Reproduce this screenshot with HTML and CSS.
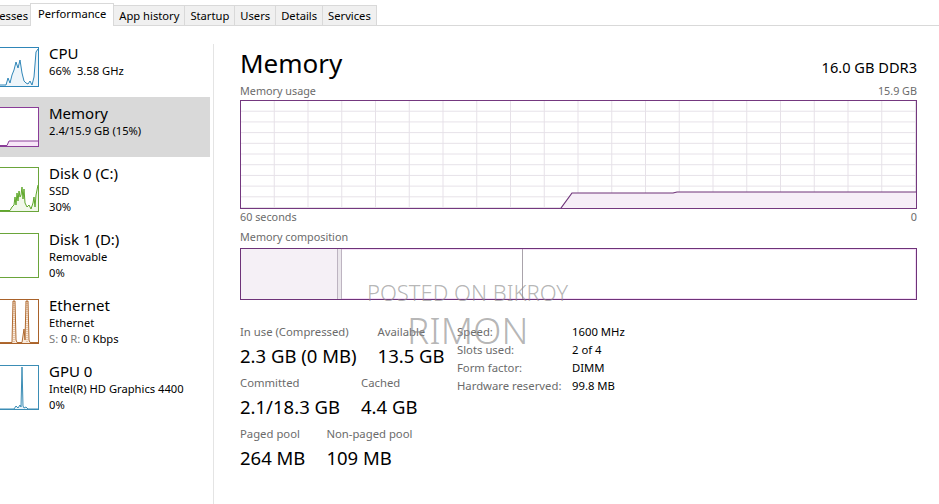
FILE: index.html
```html
<!DOCTYPE html>
<html lang="en">
<head>
<meta charset="utf-8">
<title>Task Manager - Performance</title>
<link rel="stylesheet" href="styles.css">
</head>
<body>
<div class="tabs">
  <div class="tab first">Processes</div>
  <div class="tab active">Performance</div>
  <div class="tab">App history</div>
  <div class="tab">Startup</div>
  <div class="tab">Users</div>
  <div class="tab">Details</div>
  <div class="tab">Services</div>
</div>
<div class="main">
  <nav class="sidebar">
    <div class="item">
      <div class="thumb cpu">
        <svg width="38" height="38" viewBox="0 0 38 38"><polygon class="fill" points="0,38 0,37 6,37 8,30 10,35 12,27 14,22 16,14 18,20 20,12 22,25 24,33 26,35 28,36 30,33 32,37 34,29 36,4 38,1 38,38"/><polyline class="line" points="0,37 6,37 8,30 10,35 12,27 14,22 16,14 18,20 20,12 22,25 24,33 26,35 28,36 30,33 32,37 34,29 36,4 38,1"/></svg>
      </div>
      <div class="info"><div class="name">CPU</div><div class="sub">66%&nbsp; 3.58 GHz</div></div>
    </div>
    <div class="item selected">
      <div class="thumb mem">
        <svg width="38" height="38" viewBox="0 0 38 38"><polygon class="fill" points="0,38 7,38 9,33 38,33 38,38"/><polyline class="line" points="0,37.5 7,37.5 9,33 38,33"/></svg>
      </div>
      <div class="info"><div class="name">Memory</div><div class="sub">2.4/15.9 GB (15%)</div></div>
    </div>
    <div class="item tall">
      <div class="thumb disk">
        <svg width="38" height="43" viewBox="0 0 38 43"><polygon class="fill" points="0,43 10,43 12,39 14,37 15,29 16,37 17,25 18,33 19,23 20,29 21,27 22,19 23,31 24,21 25,35 27,39 29,37 31,41 33,35 34,29 35,39 36,27 38,17 38,43"/><polyline class="line" points="0,42.5 10,42.5 12,39 14,37 15,29 16,37 17,25 18,33 19,23 20,29 21,27 22,19 23,31 24,21 25,35 27,39 29,37 31,41 33,35 34,29 35,39 36,27 38,17"/></svg>
      </div>
      <div class="info"><div class="name">Disk 0 (C:)</div><div class="sub">SSD</div><div class="sub">30%</div></div>
    </div>
    <div class="item tall">
      <div class="thumb disk"></div>
      <div class="info"><div class="name">Disk 1 (D:)</div><div class="sub">Removable</div><div class="sub">0%</div></div>
    </div>
    <div class="item tall">
      <div class="thumb eth">
        <svg width="38" height="43" viewBox="0 0 38 43"><polygon class="fill" points="0,43 12,43 13,1 15,1 16,40 17,43 22,43 24,29 25,40 26,1 28,1 29,40 30,43 38,43"/><polyline class="line" points="0,42.5 12,42.5 13,1 15,1 16,40 17,42.5 22,42.5 24,29 25,40 26,1 28,1 29,40 30,42.5 38,42.5"/><line class="dot" x1="14" y1="1" x2="14" y2="43"/><line class="dot" x1="27" y1="1" x2="27" y2="43"/></svg>
      </div>
      <div class="info"><div class="name">Ethernet</div><div class="sub">Ethernet</div><div class="sub"><span class="dim">S:</span> 0 <span class="dim">R:</span> 0 Kbps</div></div>
    </div>
    <div class="item tall">
      <div class="thumb gpu">
        <svg width="38" height="43" viewBox="0 0 38 43"><polygon class="fill" points="0,43 14,43 16,40 18,42 20,39 21,41 22,1 23,40 24,42 26,41 28,43 38,43"/><polyline class="line" points="0,43 14,43 16,40 18,42 20,39 21,41 22,1 23,40 24,42 26,41 28,43 38,43"/></svg>
      </div>
      <div class="info"><div class="name">GPU 0</div><div class="sub">Intel(R) HD Graphics 4400</div><div class="sub">0%</div></div>
    </div>
  </nav>
  <div class="sep"></div>
  <section class="content">
    <div class="head">
      <h1>Memory</h1>
      <div class="spec">16.0 GB DDR3</div>
    </div>
    <div class="axis top"><span>Memory usage</span><span>15.9 GB</span></div>
    <div class="graph">
      <svg width="675" height="107" viewBox="0 0 675 107">
        <defs>
          <pattern id="grid" width="33.75" height="10.7" patternUnits="userSpaceOnUse">
            <path d="M33.25 0V10.7M0 10.2H33.75" class="gridline"/>
          </pattern>
        </defs>
        <rect width="675" height="107" fill="url(#grid)"/>
        <polygon class="usefill" points="320,107 331,92 432,92 436,91 675,91 675,107"/>
        <polyline class="useline" points="320,107 331,92 432,92 436,91 675,91"/>
      </svg>
    </div>
    <div class="axis"><span>60 seconds</span><span>0</span></div>
    <div class="axis comp-label"><span>Memory composition</span></div>
    <div class="comp">
      <div class="seg inuse" style="width:96px"></div>
      <div class="seg modified" style="width:5px"></div>
      <div class="seg standby" style="width:181px"></div>
      <div class="seg free"></div>
    </div>
    <div class="stats">
      <div class="left">
        <div class="row">
          <div class="stat"><div class="lbl">In use (Compressed)</div><div class="val">2.3 GB (0 MB)</div></div>
          <div class="stat"><div class="lbl">Available</div><div class="val">13.5 GB</div></div>
        </div>
        <div class="row">
          <div class="stat"><div class="lbl">Committed</div><div class="val">2.1/18.3 GB</div></div>
          <div class="stat"><div class="lbl">Cached</div><div class="val">4.4 GB</div></div>
        </div>
        <div class="row">
          <div class="stat"><div class="lbl">Paged pool</div><div class="val">264 MB</div></div>
          <div class="stat"><div class="lbl">Non-paged pool</div><div class="val">109 MB</div></div>
        </div>
      </div>
      <dl class="specs">
        <dt>Speed:</dt><dd>1600 MHz</dd>
        <dt>Slots used:</dt><dd>2 of 4</dd>
        <dt>Form factor:</dt><dd>DIMM</dd>
        <dt>Hardware reserved:</dt><dd>99.8 MB</dd>
      </dl>
    </div>
    <div class="wm wm1">POSTED ON BIKROY</div>
    <div class="wm wm2">RIMON</div>
  </section>
</div>
</body>
</html>
```
FILE: styles.css
```css
html, body {
  margin: 0;
  padding: 0;
}
body {
  width: 939px;
  height: 504px;
  overflow: hidden;
  background: #fff;
  color: #000;
  font-family: "Noto Sans", "Open Sans", sans-serif;
}

/* tabs */
.tabs {
  display: flex;
  align-items: flex-end;
  height: 25px;
  border-bottom: 1px solid #d9d9d9;
  font-size: 11.2px;
}
.tab {
  height: 19px;
  line-height: 19px;
  padding: 0 5px;
  border: 1px solid #d9d9d9;
  border-bottom: 0;
  background: #f0f0f0;
  margin-left: -1px;
  white-space: nowrap;
}
.tab.first {
  margin-left: -30px;
  padding-right: 2px;
}
.tab.active {
  height: 22px;
  line-height: 19px;
  padding: 0 7px;
  margin-bottom: -1px;
  background: #fff;
}

/* layout */
.main {
  display: flex;
  height: 478px;
}
.sidebar {
  width: 210px;
  padding-top: 11px;
  flex: none;
}
.sep {
  width: 1px;
  background: #e4e4e4;
  margin: 18px 0 0 3px;
  flex: none;
}

/* sidebar items */
.item {
  display: flex;
  height: 60px;
  padding-top: 6px;
  box-sizing: border-box;
}
.item.tall {
  height: 66px;
}
.item.selected {
  background: #d9d9d9;
}
.thumb {
  width: 38px;
  height: 38px;
  margin-top: 4px;
  border: 1px solid #117dbb;
  border-left: 0;
  background: #fff;
  flex: none;
  overflow: hidden;
}
.thumb svg {
  display: block;
}
.item.tall .thumb {
  height: 43px;
}
.thumb .line {
  fill: none;
  stroke-width: 1;
}
.thumb.cpu { border-color: #2f86b8; }
.thumb.cpu .fill { fill: #eef5fa; }
.thumb.cpu .line { stroke: #2f86b8; }
.thumb.mem { border-color: #8a3c98; }
.thumb.mem .fill { fill: #f7e6f8; }
.thumb.mem .line { stroke: #8a3c98; }
.thumb.disk { border-color: #6aa53a; }
.thumb.disk .fill { fill: #f1f8ea; }
.thumb.disk .line { stroke: #5ea82a; }
.thumb.eth { border-color: #a9622a; }
.thumb.eth .fill { fill: #f9ebdd; }
.thumb.eth .line { stroke: #b06a30; }
.thumb.eth .dot { stroke: #b06a30; stroke-width: 0.6; stroke-dasharray: 1 1; }
.thumb.gpu { border-color: #3b8db5; }
.thumb.gpu .fill { fill: #eaf4fa; }
.thumb.gpu .line { stroke: #3b8db5; }

.info {
  margin-left: 10px;
}
.name {
  font-size: 15px;
  line-height: 20px;
}
.sub {
  font-size: 11.2px;
  line-height: 16px;
  white-space: nowrap;
}
.dim {
  color: #7a7a7a;
}

/* content */
.content {
  position: relative;
  flex: 1;
  padding: 20px 22px 0 26px;
}
.head {
  display: flex;
  justify-content: space-between;
  align-items: baseline;
}
.head h1 {
  margin: 0;
  font-size: 26px;
  font-weight: 400;
  line-height: 34px;
}
.spec {
  font-size: 14.6px;
}
.axis {
  display: flex;
  justify-content: space-between;
  font-size: 10.8px;
  line-height: 14px;
  color: #6b6b6b;
  margin-top: 1px;
}
.axis.top {
  margin-top: 4px;
  margin-bottom: 2px;
}
.axis.comp-label {
  margin-top: 6px;
}
.graph {
  border: 1px solid #74387f;
  height: 107px;
}
.graph svg {
  display: block;
}
.gridline {
  stroke: #e6e1e8;
  stroke-width: 1;
  fill: none;
}
.usefill {
  fill: #f6eef7;
}
.useline {
  fill: none;
  stroke: #6e3379;
  stroke-width: 1.2;
}

.comp {
  display: flex;
  margin-top: 4px;
  height: 50px;
  border: 1px solid #6e3379;
  box-shadow: inset 0 0 0 1px #f5def7;
}
.seg {
  height: 100%;
  box-sizing: border-box;
}
.seg.inuse {
  background: #f5f0f6;
}
.seg.modified {
  background: #ebe7ec;
  border-left: 1px solid #bdb4c1;
  border-right: 1px solid #bdb4c1;
}
.seg.standby {
  border-right: 1px solid #a9a3ab;
}
.seg.free {
  flex: 1;
}

/* stats */
.stats {
  display: flex;
  align-items: flex-start;
  margin-top: 24px;
}
.left {
  width: 217px;
  flex: none;
}
.row {
  display: flex;
  gap: 21px;
  margin-bottom: 6px;
}
.lbl {
  font-size: 11.3px;
  line-height: 16px;
  color: #6b6b6b;
  white-space: nowrap;
}
.val {
  font-size: 18.5px;
  line-height: 26px;
  margin-top: 3px;
  white-space: nowrap;
}
.specs {
  display: grid;
  grid-template-columns: 115px auto;
  margin: -1px 0 0 0;
  font-size: 11.3px;
  line-height: 18px;
}
.specs dt {
  color: #6b6b6b;
}
.specs dd {
  margin: 0;
}

/* watermark overlay */
.wm {
  position: absolute;
  line-height: 1;
  color: rgba(140, 140, 140, 0.65);
  white-space: nowrap;
  pointer-events: none;
}
.wm1 {
  left: 153px;
  top: 255px;
  font-size: 22px;
  font-weight: 300;
}
.wm2 {
  left: 193px;
  top: 285px;
  font-size: 37px;
  font-weight: 300;
}
```
